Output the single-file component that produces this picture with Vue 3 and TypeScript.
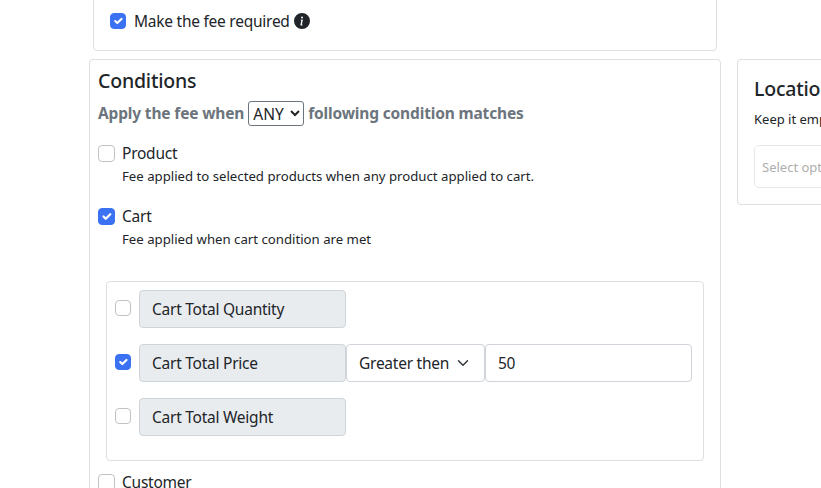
<script setup lang="ts">
interface CondRow { label: string; checked: boolean; active?: boolean }
const rows: CondRow[] = [
  { label: 'Cart Total Quantity', checked: false },
  { label: 'Cart Total Price', checked: true, active: true },
  { label: 'Cart Total Weight', checked: false },
]
</script>

<template>
  <div class="page">
    <div class="main">
      <section class="card top-card">
        <label class="req">
          <span class="check on"><svg viewBox="0 0 20 20"><path d="M6 10l3 3l6-6" fill="none" stroke="#fff" stroke-width="3" stroke-linecap="round" stroke-linejoin="round"/></svg></span>
          <span>Make the fee required</span>
          <svg class="info" viewBox="0 0 16 16"><path fill="#212529" d="M8 16A8 8 0 1 0 8 0a8 8 0 0 0 0 16zm.93-9.41-1 4.7c-.07.34.03.53.3.53.2 0 .48-.07.68-.25l-.09.42c-.29.34-.92.59-1.46.59-.7 0-1-.42-.81-1.32l.74-3.47c.06-.29 0-.4-.29-.47l-.45-.08.08-.38 2.3-.27zM8 5.5a1 1 0 1 1 0-2 1 1 0 0 1 0 2z"/></svg>
        </label>
      </section>
      <section class="card cond-card">
        <h5>Conditions</h5>
        <div class="apply">
          <span>Apply the fee when</span>
          <select class="any"><option>ANY</option></select>
          <span>following condition matches</span>
        </div>
        <div class="opt first">
          <div class="opt-line"><span class="check big"></span><span>Product</span></div>
          <p>Fee applied to selected products when any product applied to cart.</p>
        </div>
        <div class="opt second">
          <div class="opt-line">
            <span class="check big on"><svg viewBox="0 0 20 20"><path d="M6 10l3 3l6-6" fill="none" stroke="#fff" stroke-width="3" stroke-linecap="round" stroke-linejoin="round"/></svg></span>
            <span>Cart</span>
          </div>
          <p>Fee applied when cart condition are met</p>
        </div>
        <div class="inner">
          <div v-for="r in rows" :key="r.label" class="row">
            <span class="check" :class="{ on: r.checked }">
              <svg v-if="r.checked" viewBox="0 0 20 20"><path d="M6 10l3 3l6-6" fill="none" stroke="#fff" stroke-width="3" stroke-linecap="round" stroke-linejoin="round"/></svg>
            </span>
            <div class="group">
              <span class="addon">{{ r.label }}</span>
              <template v-if="r.active">
                <div class="sel">
                  <span>Greater then</span>
                  <svg viewBox="0 0 16 16"><path d="M2 5l6 6 6-6" fill="none" stroke="#343a40" stroke-width="2" stroke-linecap="round" stroke-linejoin="round"/></svg>
                </div>
                <div class="val">50</div>
              </template>
            </div>
          </div>
        </div>
        <div class="opt-line customer"><span class="check big"></span><span>Customer</span></div>
      </section>
    </div>
    <aside class="card loc">
      <h5>Locations</h5>
      <p>Keep it empty to apply everywhere</p>
      <div class="multi">Select options</div>
    </aside>
  </div>
</template>

<style>
html, body { margin: 0; overflow: hidden; background: #fff; }
</style>

<style scoped>
.page {
  width: 821px;
  height: 488px;
  overflow: hidden;
  display: flex;
  align-items: flex-start;
  gap: 16px;
  padding-left: 89px;
  box-sizing: border-box;
  font-family: "Noto Sans", sans-serif;
  font-size: 15.5px;
  letter-spacing: -0.25px;
  color: #212529;
}
.card {
  border: 1px solid #dfdfdf;
  border-radius: 4px;
  background: #fff;
  box-sizing: border-box;
}
.main { width: 632px; flex: none; }
.top-card {
  margin: -20px 4px 8px;
  height: 71px;
  padding: 29px 16px 0;
}
.req { display: flex; align-items: center; gap: 8px; height: 22px; }
.info { width: 16px; height: 16px; margin-left: -4px; }
.check {
  width: 16px;
  height: 16px;
  flex: none;
  box-sizing: border-box;
  border: 1px solid #bfc3c7;
  border-radius: 4px;
  background: #fff;
  display: block;
}
.check.big { width: 17px; height: 17px; }
.check.on { background: #3b71f3; border-color: #3b71f3; }
.check svg { display: block; width: 100%; height: 100%; }
.cond-card { height: 460px; padding: 8px; }
h5 { margin: 0; font-size: 19.5px; font-weight: 500; line-height: 25px; letter-spacing: -0.2px; }
.apply {
  display: flex;
  align-items: center;
  gap: 4px;
  margin-top: 7px;
  height: 26px;
  font-weight: 700;
  letter-spacing: -0.16px;
  color: #6c757d;
}
.any {
  width: 56px;
  height: 25px;
  font-family: inherit;
  font-size: 15.5px;
  color: #212529;
  background: #fff;
  border: 1px solid #6c757d;
  border-radius: 3px;
  padding: 0;
}
.opt.first { margin-top: 15px; }
.opt.second { margin-top: 18px; }
.opt-line { display: flex; align-items: center; gap: 7px; height: 24px; }
.opt p { margin: 1px 0 0 24px; font-size: 13.2px; line-height: 20px; letter-spacing: 0; }
.inner {
  margin: 32px 8px 0;
  width: 598px;
  height: 180px;
  box-sizing: border-box;
  border: 1px solid #dfdfdf;
  border-radius: 4px;
  padding: 8px;
  display: flex;
  flex-direction: column;
  gap: 16px;
}
.row { display: flex; align-items: center; gap: 8px; height: 38px; }
.row .check { margin-top: -2px; }
.group { display: flex; height: 38px; }
.addon, .sel, .val {
  box-sizing: border-box;
  height: 38px;
  border: 1px solid #ced4da;
  border-radius: 4px;
  display: flex;
  align-items: center;
  padding: 0 12px;
}
.addon { width: 207px; background: #e9ecef; }
.sel { width: 139px; justify-content: space-between; background: #fff; }
.sel svg { width: 12px; height: 12px; margin-right: 3px; }
.val { width: 207px; background: #fff; }
.customer { margin: 9px 0 0; }
.loc {
  flex: none;
  width: 240px;
  height: 146px;
  margin-top: 59px;
  padding: 16px;
}
.loc p { margin: 8px 0 0; font-size: 13px; line-height: 20px; white-space: nowrap; letter-spacing: 0; }
.multi {
  margin-top: 16px;
  height: 43px;
  box-sizing: border-box;
  border: 1px solid #e8e8e8;
  border-radius: 5px;
  padding: 0 7px;
  display: flex;
  align-items: center;
  font-size: 13px;
  letter-spacing: 0;
  color: #adadad;
}
</style>
